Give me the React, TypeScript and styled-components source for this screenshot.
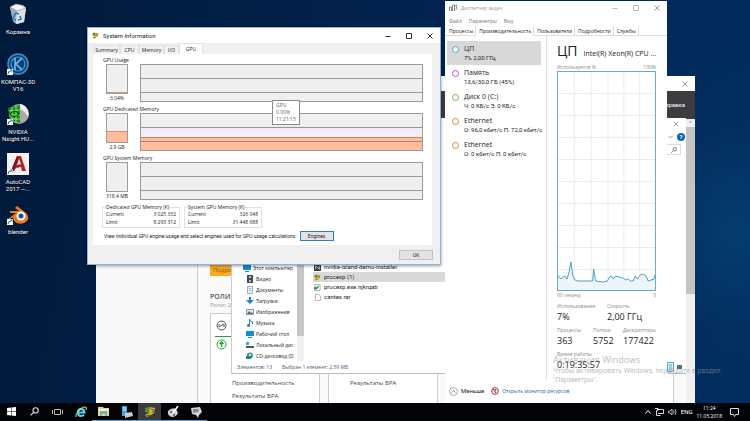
import React from "react";
import styled, { createGlobalStyle } from "styled-components";

const GlobalStyle = createGlobalStyle`
  *, *::before, *::after { box-sizing: border-box; }
  html, body, #root { margin: 0; height: 100%; }
  body { overflow: hidden; font-family: Roboto, "Noto Sans", sans-serif; font-size: 6px; line-height: 8px; color: #222; }
  button, input { font: inherit; color: inherit; border: 0; background: none; padding: 0; margin: 0; }
  ul, dl, dd, dt, h1, h2, h3, p { margin: 0; padding: 0; list-style: none; font-weight: 400; font-size: inherit; }
  svg { display: block; flex: none; }
`;

const wideFont = `"Open Sans", "Noto Sans", sans-serif`;

/* ---------- Desktop ---------- */

const Desktop = styled.div`
  position: relative;
  height: 100vh;
  overflow: hidden;
  display: flex;
  flex-direction: column;
  white-space: nowrap;
  background:
    radial-gradient(ellipse 130px 190px at 98% 55%, #053d70 0%, rgba(4, 50, 98, 0.5) 55%, transparent 100%),
    linear-gradient(100deg, #001a3a 0%, #02204a 40%, #02295a 80%, #012c60 100%);
`;

const Workspace = styled.main`
  position: relative;
  flex: 1;
  min-height: 0;
  overflow: hidden;
`;

const Shortcuts = styled.ul`
  display: flex;
  flex-direction: column;
  width: 36px;
  padding-top: 3px;
`;

const Shortcut = styled.li`
  display: flex;
  flex-direction: column;
  align-items: center;
  height: 50px;
  gap: 2px;
  color: #fff;
  line-height: 7px;
  text-align: center;
  white-space: pre;
  text-shadow: 0 1px 1px #000;
`;

const WindowFrame = styled.section<{ $x: number; $y: number; $w: number; $h: number; $bg?: string }>`
  position: absolute;
  left: ${(p) => p.$x}px;
  top: ${(p) => p.$y}px;
  width: ${(p) => p.$w}px;
  height: ${(p) => p.$h}px;
  background: ${(p) => p.$bg ?? "#fff"};
  display: flex;
  flex-direction: column;
  overflow: hidden;
`;

const TitleBar = styled.header<{ $h: number }>`
  display: flex;
  align-items: center;
  flex: none;
  height: ${(p) => p.$h}px;
  gap: 4px;
  padding: 0 2px 0 4px;
  background: #fff;
`;

const WindowTitle = styled.h1<{ $muted?: boolean }>`
  font-family: ${(p) => (p.$muted ? wideFont : "inherit")};
  font-size: ${(p) => (p.$muted ? 5 : 6)}px;
  color: ${(p) => (p.$muted ? "#999" : "#222")};
`;

const Spacer = styled.span`
  flex: 1;
`;

const CaptionButton = styled.button`
  display: grid;
  place-items: center;
  width: 17px;
  height: 10px;
`;

type CaptionKind = "min" | "max" | "close";
const captionPath: Record<CaptionKind, string> = {
  min: "M0.5 3.5h5",
  max: "M0.5 0.5h5v5h-5z",
  close: "M0.5 0.5l5 5m0-5l-5 5",
};
const captionName: Record<CaptionKind, string> = { min: "Minimize", max: "Maximize", close: "Close" };

const Caption = ({ kind, color }: { kind: CaptionKind; color: string }) => (
  <CaptionButton aria-label={captionName[kind]}>
    <svg width="6" height="6" viewBox="0 0 6 6" fill="none" stroke={color}>
      <path d={captionPath[kind]} />
    </svg>
  </CaptionButton>
);

/* ---------- Server manager ---------- */

const DarkBanner = styled.div`
  height: 28px;
  flex: none;
  display: flex;
  justify-content: flex-end;
  align-items: center;
  padding-right: 10px;
  background: #3c3b40;
  color: #fff;
`;

const ManagerBody = styled.div`
  flex: 1;
  display: flex;
  min-height: 0;
`;

const ManagerNav = styled.nav`
  width: 102px;
  flex: none;
  background: #f8f8f8;
  border-right: 1px solid #ccc;
`;

const ManagerContent = styled.div`
  flex: 1;
  display: flex;
  flex-direction: column;
  padding: 144px 0 0 12px;
  background: #fafafa;
  font-family: ${wideFont};
`;

const MoreButton = styled.button`
  width: 60px;
  height: 13px;
  padding-left: 3px;
  text-align: left;
  background: #fba822;
  color: #865400;
`;

const RolesTitle = styled.h2`
  margin-top: 17px;
  font-size: 7px;
  line-height: 8px;
  font-weight: 600;
  color: #555;
`;

const RolesSub = styled.p`
  color: #999;
  line-height: 8px;
`;

const RoleCards = styled.div`
  flex: 1;
  display: flex;
  gap: 8px;
  margin-top: 4px;
`;

const RoleCard = styled.article`
  width: 110px;
  flex: none;
  display: flex;
  flex-direction: column;
  border: 1px solid #ccc;
  border-bottom: 0;
  background: #fff;
  padding: 6px 4px 0;
`;

const RoleHead = styled.div`
  height: 17px;
  padding-left: 1px;
  border-bottom: 1px solid #2a9b36;
  margin-bottom: 2px;
`;

const RoleIcon = styled.div`
  padding-left: 1px;
`;

const RoleLines = styled.div`
  margin-top: auto;
  padding-left: 17px;
  line-height: 13px;
  height: 26px;
  color: #444;
`;

const VTrack = styled.div<{ $w: number; $thumb: number }>`
  width: ${(p) => p.$w}px;
  flex: none;
  background: linear-gradient(#c5c5c5, #c5c5c5) 0 8px / 100% ${(p) => p.$thumb}px no-repeat #f0f0f0;
  color: #777;
  text-align: center;
`;

/* ---------- Explorer ---------- */

const ExplorerFrame = styled(WindowFrame)`
  border-left: 1px solid #ccc;
  border-bottom: 1px solid #bbb;
`;

const SearchRow = styled.div`
  display: flex;
  align-items: center;
  justify-content: flex-end;
  flex: none;
  padding: 0 1px 0 0;
  height: 13px;
`;

const HelpButton = styled.button`
  display: grid;
  place-items: center;
  width: 8px;
  height: 8px;
  border-radius: 50%;
  background: #0a66b8;
  color: #fff;
  font-weight: 700;
  line-height: 8px;
  margin-left: 4px;
`;

const SearchBox = styled.label`
  display: flex;
  align-items: center;
  justify-content: flex-end;
  width: 100px;
  height: 11px;
  border: 1px solid #ddd;
  padding-right: 3px;
  margin-right: 4px;
`;

const SearchInput = styled.input`
  flex: 1;
  min-width: 0;
`;

const ExplorerBody = styled.div`
  flex: 1;
  display: flex;
  min-height: 0;
`;

const NavTree = styled.ul`
  width: 65px;
  flex: none;
  display: flex;
  flex-direction: column;
  justify-content: flex-end;
  overflow: hidden;
  font-family: ${wideFont};
  font-size: 5px;
`;

const NavItem = styled.li<{ $root?: boolean }>`
  display: flex;
  align-items: center;
  flex: none;
  gap: 2px;
  height: 11px;
  padding-left: ${(p) => (p.$root ? 11 : 14)}px;
  color: #222;
`;

const FileList = styled.ul`
  width: 142px;
  padding: 96px 0 0 9px;
`;

const FileItem = styled.li<{ $on?: boolean }>`
  display: flex;
  align-items: center;
  gap: 3px;
  height: 10px;
  padding-left: 1px;
  background: ${(p) => (p.$on ? "#d9d9d9" : "transparent")};
`;

const ExplorerStatus = styled.footer`
  display: flex;
  align-items: center;
  gap: 10px;
  flex: none;
  height: 12px;
  padding: 0 3px 0 5px;
  color: #4c5a77;
  font-family: ${wideFont};
  font-size: 5px;
`;

/* ---------- System information ---------- */

const SysTabs = styled.div`
  display: flex;
  align-items: flex-end;
  padding: 0 5px;
  height: 11px;
  flex: none;
  font-family: ${wideFont};
  font-size: 5px;
`;

const SysTab = styled.button<{ $on?: boolean; $w: number }>`
  width: ${(p) => p.$w}px;
  height: ${(p) => (p.$on ? 11 : 9)}px;
  text-align: center;
  border: 1px solid #e2e2e2;
  border-bottom: 0;
  background: ${(p) => (p.$on ? "#fff" : "#f2f2f2")};
  line-height: 8px;
`;

const SysPage = styled.div`
  display: flex;
  flex-direction: column;
  margin: 0 8px 0 5px;
  padding: 2px 9px 0 9px;
  height: 191px;
  flex: none;
  background: #fff;
  font-size: 5px;
`;

const Meter = styled.section`
  display: flex;
  flex-direction: column;
  height: 49px;

  h3 { padding-left: 1px; font-family: ${wideFont}; }
`;

const MeterRow = styled.div`
  display: flex;
  gap: 12px;
  padding-left: 4px;
`;

const GaugeCell = styled.div`
  width: 22px;
  text-align: center;
  line-height: 8px;
  font-family: ${wideFont};
`;

const Gauge = styled.div<{ $fill: number }>`
  height: 30px;
  border: 1px solid #9c9c9c;
  background: linear-gradient(to top, #ffbd9c ${(p) => p.$fill}px, #e09078 ${(p) => p.$fill}px, #e09078 ${(p) => p.$fill + 1}px, #efefef ${(p) => p.$fill + 1}px);
`;

const Graph = styled.div<{ $filled?: boolean }>`
  flex: 1;
  height: 38px;
  border: 1px solid #999;
  background: ${(p) =>
    p.$filled
      ? `linear-gradient(#efefef 13px, #91959c 13px, #91959c 14px, #f3eafa 14px, #f3eafa 20px, #eff4f2 20px, #eff4f2 23px, #cf7d6a 23px, #cf7d6a 24px, #ffbd9c 24px, #ffbd9c 27px, #a9807a 27px, #a9807a 28px, #ffbd9c 28px)`
      : `linear-gradient(#efefef 13px, #999 13px, #999 14px, #efefef 14px, #efefef 27px, #999 27px, #999 28px, #efefef 28px)`};
`;

const MemoryBoxes = styled.div`
  display: flex;
  gap: 4px;
  height: 24px;
  margin-top: 1px;
  font-family: ${wideFont};
`;

const MemoryBox = styled.fieldset`
  width: 78px;
  height: 24px;
  margin: 0;
  min-width: 0;
  padding: 0 3px;
  border: 1px solid #e0e0e0;

  legend { padding: 0; line-height: 6px; }
`;

const MemoryTable = styled.table`
  width: 100%;
  border-spacing: 0;
  line-height: 8px;

  th, td { padding: 0; font-weight: 400; text-align: left; }
  td { text-align: right; }
`;

const EngineRow = styled.div`
  display: flex;
  align-items: center;
  gap: 3px;
  margin-top: 3px;
  padding-left: 2px;
`;

const PushButton = styled.button<{ $focus?: boolean }>`
  width: 34px;
  height: 10px;
  line-height: 7px;
  text-align: center;
  font-size: 5px;
  background: #e3e3e3;
  border: 1px solid ${(p) => (p.$focus ? "#2b80c5" : "#c2c2c2")};
`;

const SysFooter = styled.footer`
  display: flex;
  justify-content: flex-end;
  padding: 5px 7px 0 0;
`;

const Tooltip = styled.div`
  position: absolute;
  left: 272px;
  top: 100px;
  padding: 1px 3px;
  border: 1px solid #888;
  background: #fff;
  color: #666;
  font-family: ${wideFont};
  font-size: 5px;
  line-height: 7px;
`;

/* ---------- Task manager ---------- */

const MenuBar = styled.nav`
  display: flex;
  gap: 7px;
  padding: 0 4px;
  height: 11px;
  flex: none;
  color: #777;
  font-family: ${wideFont};
  font-size: 5px;
`;

const TaskTabs = styled.div`
  display: flex;
  flex: none;
  padding-left: 1px;
  height: 10px;
  border-bottom: 1px solid #ddd;
  font-family: ${wideFont};
  font-size: 5px;
`;

const TaskTab = styled.button<{ $on?: boolean }>`
  height: 10px;
  padding: 0 2px 0 3px;
  border-right: 1px solid #ddd;
  background: #fff;
  border-bottom: 1px solid ${(p) => (p.$on ? "#fff" : "#ddd")};
`;

const TaskBody = styled.div`
  flex: 1;
  display: flex;
  min-height: 0;
`;

const ResourceList = styled.ul`
  width: 102px;
  flex: none;
  padding: 5px 5px 0 2px;
  border-right: 1px solid #ddd;
`;

const Resource = styled.li<{ $on?: boolean }>`
  display: flex;
  gap: 5px;
  height: 24px;
  padding: 3px 0 0 5px;
  background: ${(p) => (p.$on ? "#d8d8d8" : "transparent")};
`;

const Ring = styled.span<{ $c: string }>`
  width: 7px;
  height: 7px;
  margin-top: 2px;
  flex: none;
  border: 1px solid ${(p) => p.$c};
  border-radius: 50%;
  background: #fff;
`;

const ResourceName = styled.h3`
  font-family: ${wideFont};
  font-size: 7px;
  line-height: 10px;
`;

const ResourceValue = styled.p`
  line-height: 7px;
`;

const Details = styled.div`
  flex: 1;
  min-width: 0;
  display: flex;
  flex-direction: column;
  padding: 6px 11px 0 10px;
`;

const DetailsHead = styled.header`
  display: flex;
  align-items: baseline;
  justify-content: space-between;
  line-height: 18px;
`;

const BigName = styled.h2`
  font-family: ${wideFont};
  font-size: 14px;
`;

const Model = styled.span`
  font-family: ${wideFont};
  font-size: 7px;
`;

const Between = styled.div`
  display: flex;
  justify-content: space-between;
  color: #888;
  font-family: ${wideFont};
  font-size: 5px;
  line-height: 8px;
`;

const ChartSvg = styled.svg`
  width: 100%;
  height: 220px;
`;

const Stats = styled.dl<{ $cols: string }>`
  display: grid;
  grid-template-columns: ${(p) => p.$cols};
  padding-top: 3px;
  height: 24px;
  font-family: ${wideFont};
`;

const StatLabel = styled.dt`
  color: #888;
  line-height: 8px;
  font-size: 5px;
`;

const StatValue = styled.dd`
  font-size: 9px;
  line-height: 13px;
`;

const TaskFooter = styled.footer`
  display: flex;
  align-items: center;
  gap: 3px;
  height: 24px;
  flex: none;
  padding-left: 4px;

  a { color: #1c5fb0; text-decoration: none; font-family: ${wideFont}; font-size: 5px; }
`;

const LessButton = styled.button`
  display: flex;
  align-items: center;
  gap: 3px;
  margin-right: 4px;
`;

const Watermark = styled.div`
  position: absolute;
  left: 553px;
  top: 353px;
  color: rgba(150, 150, 150, 0.65);
  font-size: 7px;
  line-height: 9px;
  pointer-events: none;

  h2 { font-family: ${wideFont}; font-size: 9px; line-height: 14px; }
`;

/* ---------- Taskbar ---------- */

const Taskbar = styled.footer`
  display: flex;
  align-items: stretch;
  flex: none;
  height: 18px;
  background: #030407;
  color: #fff;
`;

const TaskButton = styled.button<{ $open?: boolean; $on?: boolean }>`
  display: grid;
  place-items: center;
  width: 23px;
  background: ${(p) => (p.$on ? "#3b3b3d" : "transparent")};
  border-bottom: 1px solid ${(p) => (p.$open ? "#5d9bcd" : "transparent")};
`;

const Tray = styled.div`
  display: flex;
  align-items: center;
  margin-left: auto;
  gap: 4px;
  padding-right: 11px;
`;

const Clock = styled.time`
  font-family: ${wideFont};
  font-size: 5px;
  line-height: 8px;
  text-align: center;
  margin: 0 4px 0 0;
`;

/* ---------- Drawings ---------- */

const LinkArrow = () => (
  <g>
    <rect x="0" y="16" width="6" height="6" fill="#fff" />
    <path d="M1 21q0-3 3-3" fill="none" stroke="#1464b5" />
    <path d="M3 16.5h2.500v2.500z" fill="#1464b5" />
  </g>
);

const BinIcon = () => (
  <svg width="22" height="23" viewBox="0 0 22 23">
    <path d="M3 4l13-2 3 3-2 14-7 2-4-3z" fill="#c9ced2" />
    <path d="M3 4l7 3-1 14-3-3z" fill="#a5adb3" />
    <path d="M10 7l9-2-2 14-8 2z" fill="#dde1e3" />
    <path d="M3 4l6-3 5 1 5 3-9 3z" fill="#f3f3f3" stroke="#8b9398" strokeWidth=".6" />
    <path d="M7 13l2-3 3 1m1 2l1 3-3 1m-2 0l-3-1 1-3" fill="none" stroke="#2778c9" strokeWidth="1.600" />
  </svg>
);

const KompasIcon = () => (
  <svg width="22" height="23" viewBox="0 0 22 23">
    <circle cx="11" cy="11" r="10" fill="#103e73" stroke="#3f8cc9" strokeWidth="1.600" />
    <circle cx="11" cy="11" r="7" fill="none" stroke="#4b9bd6" strokeWidth="1.200" />
    <path d="M8 5v12M15 5l-6 6 6 6M12 8l-3 3 3 3" fill="none" stroke="#62afe4" strokeWidth="1.800" />
    <LinkArrow />
  </svg>
);

const NvidiaIcon = () => (
  <svg width="22" height="23" viewBox="0 0 22 23">
    <circle cx="12" cy="11" r="10" fill="#a8aaa9" />
    <path d="M13 1a10 10 0 0 1 8 13q-4-7-8-8z" fill="#ececec" />
    <path d="M1 5l12-3v18L3 17z" fill="#1a8b20" />
    <path d="M2 8l11-1M2 12h11M3 16h10M5 4v13M9 3v16" stroke="#8ceb65" strokeWidth="1" />
    <path d="M3 11q5-6 9 0-5 5-9 0z" fill="none" stroke="#07350d" />
    <LinkArrow />
  </svg>
);

const AutocadIcon = () => (
  <svg width="22" height="23" viewBox="0 0 22 23">
    <rect width="22" height="22" fill="#f5f1f1" />
    <path d="M4 18L10 3h4l5 15h-4l-1-4-5 1-2 3z" fill="#b5202a" />
    <path d="M10 12l2-6 2 5z" fill="#f5f1f1" />
    <path d="M4 18L10 3l1 3-4 12z" fill="#7d1420" />
    <LinkArrow />
  </svg>
);

const BlenderIcon = () => (
  <svg width="22" height="23" viewBox="0 0 22 23">
    <path d="M1 16l8-6H3V8h9L8 5l2-2 9 7q4 4 1 8-4 4-10 2-4-2-4-6l-4 3z" fill="#ee7c1c" />
    <circle cx="14" cy="13" r="4.500" fill="#fff" />
    <circle cx="14" cy="13" r="2.500" fill="#174f93" />
    <LinkArrow />
  </svg>
);

const GearsIcon = ({ size = 8 }: { size?: number }) => (
  <svg width={size} height={size} viewBox="0 0 12 12">
    <path d="M1 2l4-1 2 3-2 3-4-1z" fill="#5f8b2b" />
    <path d="M6 1l5 1-1 5-3 2-4 2-2-2 4-2z" fill="#d8b42c" />
    <path d="M7 3l3 1-2 3M2 10l5-1" fill="none" stroke="#555" />
  </svg>
);

type FolderKind = "pc" | "video" | "doc" | "down" | "image" | "music" | "desk" | "disk" | "cd";
const FolderIcon = ({ kind }: { kind: FolderKind }) => (
  <svg width="8" height="8" viewBox="0 0 8 8">
    {(kind === "pc" || kind === "desk") && <path d="M0 1h8v5H0zM2 7h4v1H2z" fill="#148bd8" />}
    {kind === "video" && (<><rect x="1" width="6" height="8" fill="#4a4a50" /><path d="M3 1h2v2H3zM3 5h2v2H3z" fill="#a8c7e6" /></>)}
    {kind === "doc" && <path d="M1.500.5h5v7h-5zM3 2.500h2M3 4.500h2" fill="#eef5fb" stroke="#8fb0ca" />}
    {kind === "down" && <path d="M3 0h2v3h3L4 7 0 3h3z" fill="#1d7fd0" />}
    {kind === "image" && (<><path d="M.5 1.500h7v5h-7z" fill="#dfeaf2" stroke="#999" /><path d="M1 6l2-3 2 2 1-1 1 2z" fill="#536c80" /></>)}
    {kind === "music" && (<><path d="M3.500 6V0q0 2 3 3v2" fill="none" stroke="#167fd1" /><circle cx="2.500" cy="6.500" r="1.500" fill="#167fd1" /></>)}
    {kind === "disk" && (<><path d="M0 5h8v2H0z" fill="#555" /><path d="M0 1h3v3H0z" fill="#35a5e5" /></>)}
    {kind === "cd" && (<><circle cx="4" cy="3.500" r="3" fill="#3a9b8e" /><path d="M0 4h5v3H0z" fill="#28877a" /><circle cx="4" cy="3" r="1" fill="#fff" /></>)}
  </svg>
);

const SearchGlyph = ({ color, size }: { color: string; size: number }) => (
  <svg width={size} height={size} viewBox="0 0 8 8" fill="none" stroke={color}>
    <circle cx="5" cy="3" r="2.300" />
    <path d="M3.300 4.700L.5 7.500" />
  </svg>
);

const shortcuts = [
  { label: "Корзина", icon: <BinIcon /> },
  { label: "КОМПАС-3D\nV16", icon: <KompasIcon /> },
  { label: "NVIDIA\nNsight HU...", icon: <NvidiaIcon /> },
  { label: "AutoCAD\n2017 —...", icon: <AutocadIcon /> },
  { label: "blender", icon: <BlenderIcon /> },
];

const folders: [FolderKind, string][] = [
  ["pc", "Этот компьютер"],
  ["video", "Видео"],
  ["doc", "Документы"],
  ["down", "Загрузки"],
  ["image", "Изображения"],
  ["music", "Музыка"],
  ["desk", "Рабочий стол"],
  ["disk", "Локальный дис"],
  ["cd", "CD-дисковод (D"],
];

const meters = [
  { title: "GPU Usage", value: "3.04%", fill: 0, filled: false },
  { title: "GPU Dedicated Memory", value: "2.9 GB", fill: 10, filled: true },
  { title: "GPU System Memory", value: "318.4 MB", fill: -1, filled: false },
];

const memory = [
  { title: "Dedicated GPU Memory (K)", current: "3 025 332", limit: "8 293 312" },
  { title: "System GPU Memory (K)", current: "326 048", limit: "31 448 688" },
];

const resources = [
  { name: "ЦП", value: "7%  2,00 ГГц", color: "#45a4d4" },
  { name: "Память", value: "13,6/30,0 ГБ (45%)", color: "#b455c2" },
  { name: "Диск 0 (C:)", value: "Ч: 0 КБ/с З: 0 КБ/с", color: "#70b83d" },
  { name: "Ethernet", value: "О: 96,0 кбит/с П: 72,0 кбит/с", color: "#d9803d" },
  { name: "Ethernet", value: "О: 0 кбит/с П: 0 кбит/с", color: "#d9803d" },
];

const cpuLine =
  "0,203 2,206 4,208 6,206 8,205 10,208 12,202 14,191 16,205 18,209 21,210 36,210 37,198 39,210 46,211 51,210 53,206 55,205 57,208 59,205 63,206 67,207 69,209 72,208 74,210 77,210 79,205 81,208 84,204 86,203 88,204 90,205 92,210 95,209 98,208 99,204";

/* ---------- Windows ---------- */

const ServerManager = () => (
  <WindowFrame $x={96} $y={76} $w={599} $h={327}>
    <TitleBar $h={15}>
      <Spacer />
      <Caption kind="close" color="#999" />
    </TitleBar>
    <DarkBanner>Справка</DarkBanner>
    <ManagerBody>
      <ManagerNav />
      <ManagerContent>
        <MoreButton>Подробнее</MoreButton>
        <RolesTitle>РОЛИ И ГРУППЫ</RolesTitle>
        <RolesSub>Роли: 2 | Группы: 1</RolesSub>
        <RoleCards>
          <RoleCard>
            <RoleHead>
              <svg width="11" height="11" viewBox="0 0 11 11" fill="none" stroke="#555">
                <circle cx="5.500" cy="5.500" r="4.500" />
                <path d="M3 4v3M3 7l5-3M8 4v3" />
              </svg>
            </RoleHead>
            <RoleIcon>
              <svg width="11" height="11" viewBox="0 0 11 11" fill="none" stroke="#20a52c">
                <circle cx="5.500" cy="5.500" r="4.500" />
                <path d="M5.500 8V3M3.500 5l2-2 2 2" strokeWidth="1.500" />
              </svg>
            </RoleIcon>
            <RoleLines>
              <p>Производительность</p>
              <p>Результаты BPA</p>
            </RoleLines>
          </RoleCard>
          <RoleCard>
            <RoleLines>
              <p>Результаты BPA</p>
            </RoleLines>
          </RoleCard>
          <RoleCard />
          <RoleCard />
        </RoleCards>
      </ManagerContent>
      <VTrack $w={9} $thumb={167}>^</VTrack>
    </ManagerBody>
  </WindowFrame>
);

const Explorer = () => (
  <ExplorerFrame $x={231} $y={118} $w={455} $h={256}>
    <TitleBar $h={12}>
      <Spacer />
      <Caption kind="close" color="#aaa" />
    </TitleBar>
    <SearchRow>
      <svg width="5" height="4" viewBox="0 0 5 4" fill="none" stroke="#999"><path d="M.5 1l2 2 2-2" /></svg>
      <HelpButton>?</HelpButton>
    </SearchRow>
    <SearchRow>
      <SearchBox>
        <SearchInput aria-label="Поиск" />
        <SearchGlyph color="#555" size={6} />
      </SearchBox>
    </SearchRow>
    <ExplorerBody>
      <NavTree>
        {folders.map(([kind, label], i) => (
          <NavItem key={label} $root={i === 0}>
            <FolderIcon kind={kind} />
            {label}
          </NavItem>
        ))}
      </NavTree>
      <VTrack $w={7} $thumb={172} />
      <FileList>
        <FileItem />
        <FileItem>
          <svg width="7" height="7" viewBox="0 0 8 8"><rect width="8" height="8" rx="1" fill="#333d45" /><path d="M2 6V2l4 4V2" stroke="#cde" fill="none" /></svg>
          nvidia-island-demo-installer
        </FileItem>
        <FileItem $on><GearsIcon size={7} />procexp (1)</FileItem>
        <FileItem>
          <svg width="7" height="7" viewBox="0 0 8 8"><path d="M1 .5h6v7H1z" fill="#fff" stroke="#aaa" /><path d="M0 3q2 2 6-2-1 6-6 5z" fill="#27965b" /></svg>
          procexp.exe.njkrqab
        </FileItem>
        <FileItem>
          <svg width="7" height="7" viewBox="0 0 8 8"><path d="M1.500.5h4l2 2v5h-6z" fill="#fff" stroke="#aaa" /></svg>
          cantex.rar
        </FileItem>
      </FileList>
    </ExplorerBody>
    <ExplorerStatus>
      <span>Элементов: 13</span>
      <span>Выбран 1 элемент: 2,59 МБ</span>
      <Spacer />
      <svg width="16" height="10" viewBox="0 0 16 10">
        <path d="M.5.5h6v9h-6zM2 3h3M2 5h3M2 7h3" fill="#d9effc" stroke="#58a5d0" />
        <path d="M10 3h5v4h-5z" fill="#536f83" />
      </svg>
    </ExplorerStatus>
  </ExplorerFrame>
);

const SysFrame = styled(WindowFrame)`
  border: 1px solid #8bb5d6;
  box-shadow: 0 1px 3px rgba(0, 0, 0, 0.4);
`;

const SystemInformation = () => (
  <SysFrame $x={87} $y={27} $w={354} $h={238} $bg="#f0f0f0">
    <TitleBar $h={15}>
      <GearsIcon size={7} />
      <WindowTitle>System Information</WindowTitle>
      <Spacer />
      <Caption kind="min" color="#333" />
      <Caption kind="max" color="#333" />
      <Caption kind="close" color="#333" />
    </TitleBar>
    <SysTabs role="tablist">
      <SysTab role="tab" $w={27}>Summary</SysTab>
      <SysTab role="tab" $w={19}>CPU</SysTab>
      <SysTab role="tab" $w={25}>Memory</SysTab>
      <SysTab role="tab" $w={15}>I/O</SysTab>
      <SysTab role="tab" $w={24} $on aria-selected>GPU</SysTab>
    </SysTabs>
    <SysPage>
      {meters.map((m) => (
        <Meter key={m.title}>
          <h3>{m.title}</h3>
          <MeterRow>
            <GaugeCell>
              <Gauge $fill={m.fill} />
              {m.value}
            </GaugeCell>
            <Graph $filled={m.filled} />
          </MeterRow>
        </Meter>
      ))}
      <MemoryBoxes>
        {memory.map((m) => (
          <MemoryBox key={m.title}>
            <legend>{m.title}</legend>
            <MemoryTable>
              <tbody>
                <tr><th scope="row">Current</th><td>{m.current}</td></tr>
                <tr><th scope="row">Limit</th><td>{m.limit}</td></tr>
              </tbody>
            </MemoryTable>
          </MemoryBox>
        ))}
      </MemoryBoxes>
      <EngineRow>
        View individual GPU engine usage and select engines used for GPU usage calculations:
        <PushButton $focus>Engines</PushButton>
      </EngineRow>
    </SysPage>
    <SysFooter>
      <PushButton>OK</PushButton>
    </SysFooter>
  </SysFrame>
);

const TaskManager = () => (
  <WindowFrame $x={445} $y={1} $w={222} $h={402}>
    <TitleBar $h={14}>
      <svg width="8" height="8" viewBox="0 0 8 8" fill="none" stroke="#888"><path d="M.5 7V3h2v4M3.500 7V1h2v6M6 2l2-1-1 5" /></svg>
      <WindowTitle $muted>Диспетчер задач</WindowTitle>
      <Spacer />
      <Caption kind="min" color="#bbb" />
      <Caption kind="max" color="#bbb" />
      <Caption kind="close" color="#999" />
    </TitleBar>
    <MenuBar>
      <button>Файл</button>
      <button>Параметры</button>
      <button>Вид</button>
    </MenuBar>
    <TaskTabs role="tablist">
      <TaskTab role="tab">Процессы</TaskTab>
      <TaskTab role="tab" $on aria-selected>Производительность</TaskTab>
      <TaskTab role="tab">Пользователи</TaskTab>
      <TaskTab role="tab">Подробности</TaskTab>
      <TaskTab role="tab">Службы</TaskTab>
    </TaskTabs>
    <TaskBody>
      <ResourceList>
        {resources.map((r, i) => (
          <Resource key={i} $on={i === 0}>
            <Ring $c={r.color} />
            <div>
              <ResourceName>{r.name}</ResourceName>
              <ResourceValue>{r.value}</ResourceValue>
            </div>
          </Resource>
        ))}
      </ResourceList>
      <Details>
        <DetailsHead>
          <BigName>ЦП</BigName>
          <Model>Intel(R) Xeon(R) CPU ...</Model>
        </DetailsHead>
        <Between><span>Используется %</span><span>100%</span></Between>
        <ChartSvg viewBox="0 0 100 220" preserveAspectRatio="none">
          <path d="M17.500 0v220M34.500 0v220M51.500 0v220M67.500 0v220M83.500 0v220M0 22.500h100M0 44.500h100M0 66.500h100M0 88.500h100M0 110.500h100M0 132.500h100M0 154.500h100M0 176.500h100M0 198.500h100" stroke="#e8eef2" fill="none" />
          <polygon points={`0,220 ${cpuLine} 99,220`} fill="#edf5fa" />
          <polyline points={cpuLine} fill="none" stroke="#4c9dc4" />
          <rect x=".5" y=".5" width="99" height="219" fill="none" stroke="#6ba8d0" />
        </ChartSvg>
        <Between><span>60 секунд</span><span>0</span></Between>
        <Stats $cols="50px 1fr">
          <div><StatLabel>Использование</StatLabel><StatValue>7%</StatValue></div>
          <div><StatLabel>Скорость</StatLabel><StatValue>2,00 ГГц</StatValue></div>
        </Stats>
        <Stats $cols="36px 30px 1fr">
          <div><StatLabel>Процессы</StatLabel><StatValue>363</StatValue></div>
          <div><StatLabel>Потоки</StatLabel><StatValue>5752</StatValue></div>
          <div><StatLabel>Дескрипторы</StatLabel><StatValue>177422</StatValue></div>
        </Stats>
        <Stats $cols="1fr">
          <div><StatLabel>Время работы</StatLabel><StatValue>0:19:35:57</StatValue></div>
        </Stats>
      </Details>
    </TaskBody>
    <TaskFooter>
      <LessButton>
        <svg width="9" height="9" viewBox="0 0 9 9" fill="none" stroke="#888"><circle cx="4.500" cy="4.500" r="4" strokeWidth=".7" /><path d="M2.500 5.500l2-2 2 2" /></svg>
        Меньше
      </LessButton>
      <svg width="8" height="8" viewBox="0 0 8 8" fill="none"><circle cx="4" cy="4" r="3.400" fill="#f3e6e8" stroke="#a34755" /><path d="M2 2l3 4M4 2l1 2" stroke="#a32438" /></svg>
      <a href="#monitor">Открыть монитор ресурсов</a>
    </TaskFooter>
  </WindowFrame>
);

/* ---------- Page ---------- */

export default function App() {
  return (
    <Desktop>
      <GlobalStyle />
      <Workspace>
        <Shortcuts>
          {shortcuts.map((s) => (
            <Shortcut key={s.label}>{s.icon}{s.label}</Shortcut>
          ))}
        </Shortcuts>
        <ServerManager />
        <Explorer />
        <SystemInformation />
        <Tooltip role="tooltip">GPU<br />0.00%<br />11:21:15</Tooltip>
        <TaskManager />
        <Watermark>
          <h2>Активация Windows</h2>
          <p>Чтобы активировать Windows, перейдите в раздел</p>
          <p>"Параметры".</p>
        </Watermark>
      </Workspace>
      <Taskbar>
        <TaskButton aria-label="Start">
          <svg width="9" height="9" viewBox="0 0 9 9" fill="#fff"><path d="M0 1l4-.5V4H0zM4.500.5L9 0v4H4.500zM0 4.500h4V8.500L0 8zM4.500 4.500H9V9l-4.500-.5z" /></svg>
        </TaskButton>
        <TaskButton aria-label="Search"><SearchGlyph color="#ddd" size={9} /></TaskButton>
        <TaskButton aria-label="Task view">
          <svg width="11" height="8" viewBox="0 0 11 8" fill="none" stroke="#bbb"><path d="M2.500 1.500h6v5h-6zM.5 2v4M10.500 2v4" /></svg>
        </TaskButton>
        <TaskButton aria-label="Internet Explorer">
          <svg width="12" height="12" viewBox="0 0 12 12" fill="none"><path d="M3 6.500h6.500Q9 3 6 3 3 3 3 6.500T6 10q2 0 3-1.500" stroke="#59d5f2" strokeWidth="2" /><path d="M1 11Q0 8 4 4t7-3q1 0 0 3" stroke="#f0df6b" /></svg>
        </TaskButton>
        <TaskButton $open aria-label="File Explorer">
          <svg width="11" height="9" viewBox="0 0 11 9"><path d="M0 0h5l1 1h5v8H0z" fill="#f3d47b" /><path d="M2 4h7v5H7V7H4v2H2z" fill="#65b5d8" /><path d="M1 2h9v2H1z" fill="#fff3bc" /></svg>
        </TaskButton>
        <TaskButton $open aria-label="Server Manager">
          <svg width="12" height="12" viewBox="0 0 12 12"><path d="M1 0h5v10H1z" fill="#4aa0dc" /><path d="M2 2h3M2 4h3" stroke="#d6efff" /><path d="M4 7l7-1 1 4-8 2z" fill="#c4cdd4" /></svg>
        </TaskButton>
        <TaskButton $open $on aria-label="Process Explorer"><GearsIcon size={12} /></TaskButton>
        <TaskButton $open aria-label="Paint tool">
          <svg width="12" height="12" viewBox="0 0 12 12"><path d="M1 5q4-4 8-2l2 4q-2 4-6 4-5-1-4-6z" fill="#d1d4d5" /><path d="M11 0L6 7" stroke="#fff" strokeWidth="1.500" /><circle cx="4" cy="6" r="1" fill="#555" /><circle cx="7" cy="9" r="1" fill="#555" /></svg>
        </TaskButton>
        <TaskButton $open aria-label="Utility">
          <svg width="12" height="12" viewBox="0 0 12 12"><path d="M1 2l9-1 2 5-3 3-1 3-2-3-4-1z" fill="#d2d3d4" /><path d="M3 3l6 0-1 3-5 1z" fill="#888" /></svg>
        </TaskButton>
        <Tray>
          <svg width="6" height="4" viewBox="0 0 6 4" fill="none" stroke="#fff"><path d="M.5 3.500l2.500-3 2.500 3" /></svg>
          <svg width="9" height="8" viewBox="0 0 9 8" fill="none" stroke="#ddd"><path d="M2 1.500h6.500v4H3M0 .5h3v2H1.500v5h4" /></svg>
          <svg width="9" height="8" viewBox="0 0 9 8" fill="none" stroke="#ddd"><path d="M.5 3v2H2l2 2V1L2 3zM5.500 2.500q1 1.500 0 3M7 1q2 3 0 6" strokeWidth=".8" /></svg>
          <span>ENG</span>
          <Clock>11:24<br />11.05.2018</Clock>
          <svg width="9" height="9" viewBox="0 0 9 9" fill="none" stroke="#ddd"><path d="M.5.5h8v6h-3l-1 2-1-2h-3z" /></svg>
        </Tray>
      </Taskbar>
    </Desktop>
  );
}
